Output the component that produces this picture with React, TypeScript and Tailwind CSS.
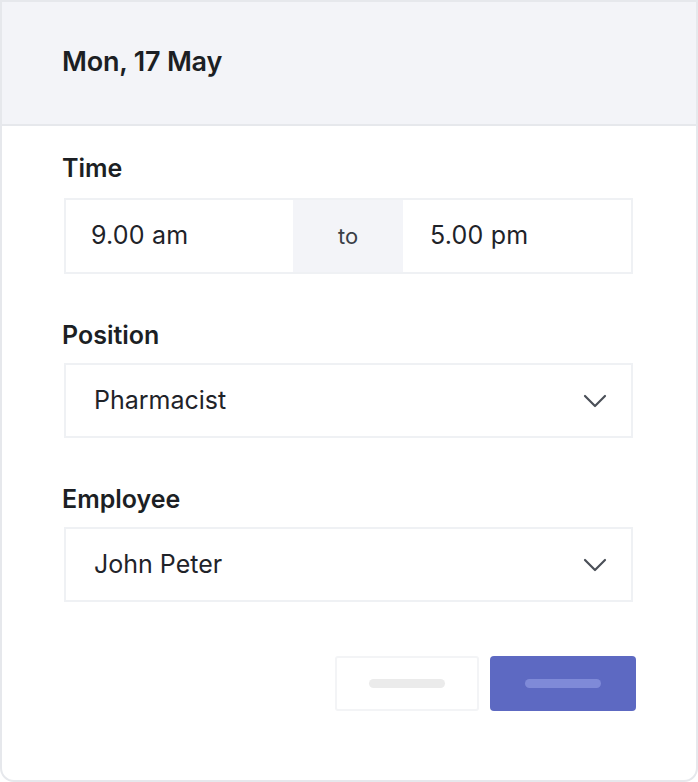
import React from 'react';

function Chevron() {
  return (
    <svg width="24" height="14" viewBox="0 0 24 14" fill="none" className="shrink-0">
      <path d="M2 2 L12 12 L22 2" stroke="#4b5058" strokeWidth="2.2" strokeLinecap="round" strokeLinejoin="round" />
    </svg>
  );
}

function SelectField({ value }: { value: string }) {
  return (
    <div className="flex h-[75px] items-center justify-between border-2 border-[#eff1f4] bg-white pl-[28px] pr-[24px]">
      <span className="text-[25px] text-[#1f2329]">{value}</span>
      <Chevron />
    </div>
  );
}

export default function App() {
  return (
    <div className="flex h-[782px] w-[698px] flex-col overflow-hidden rounded-b-[14px] border-2 border-[#e6e8ec] bg-white font-['Inter',sans-serif]">
      {/* Header */}
      <div className="flex h-[124px] shrink-0 items-center border-b-2 border-[#e6e8ec] bg-[#f3f4f8] pl-[60px]">
        <h1 className="-mt-[2px] text-[27px] font-semibold tracking-[-0.2px] text-[#1c1f24]">Mon, 17 May</h1>
      </div>

      {/* Body */}
      <div className="flex flex-col pl-[62px] pr-[63px] pt-[26px]">
        <label className="-ml-[2px] text-[25px] font-semibold leading-[32px] text-[#1c1f24]">Time</label>
        <div className="mt-[14px] flex h-[76px] border-2 border-[#eff1f4]">
          <div className="flex w-[227px] items-center pl-[25px] text-[25px] tracking-[0.2px] text-[#1f2329]">9.00 am</div>
          <div className="flex w-[110px] items-center justify-center bg-[#f3f4f8] text-[22px] text-[#3a3f47]">to</div>
          <div className="flex flex-1 items-center pl-[27px] text-[25px] tracking-[0.2px] text-[#1f2329]">5.00 pm</div>
        </div>

        <label className="-ml-[2px] mt-[45px] text-[25px] font-semibold leading-[32px] text-[#1c1f24]">Position</label>
        <div className="mt-[12px]">
          <SelectField value="Pharmacist" />
        </div>

        <label className="-ml-[2px] mt-[45px] text-[25px] font-semibold leading-[32px] text-[#1c1f24]">Employee</label>
        <div className="mt-[12px]">
          <SelectField value="John Peter" />
        </div>

        {/* Actions */}
        <div className="-mr-[3px] mt-[54px] flex justify-end gap-[11px]">
          <button className="flex h-[55px] w-[144px] items-center justify-center rounded-[3px] border-2 border-[#f3f4f6] bg-white">
            <span className="h-[9px] w-[76px] rounded-full bg-[#ebebeb]" />
          </button>
          <button className="flex h-[55px] w-[146px] items-center justify-center rounded-[4px] bg-[#5d69c2]">
            <span className="h-[9px] w-[76px] rounded-full bg-[#7f8ad8]" />
          </button>
        </div>
      </div>
    </div>
  );
}
